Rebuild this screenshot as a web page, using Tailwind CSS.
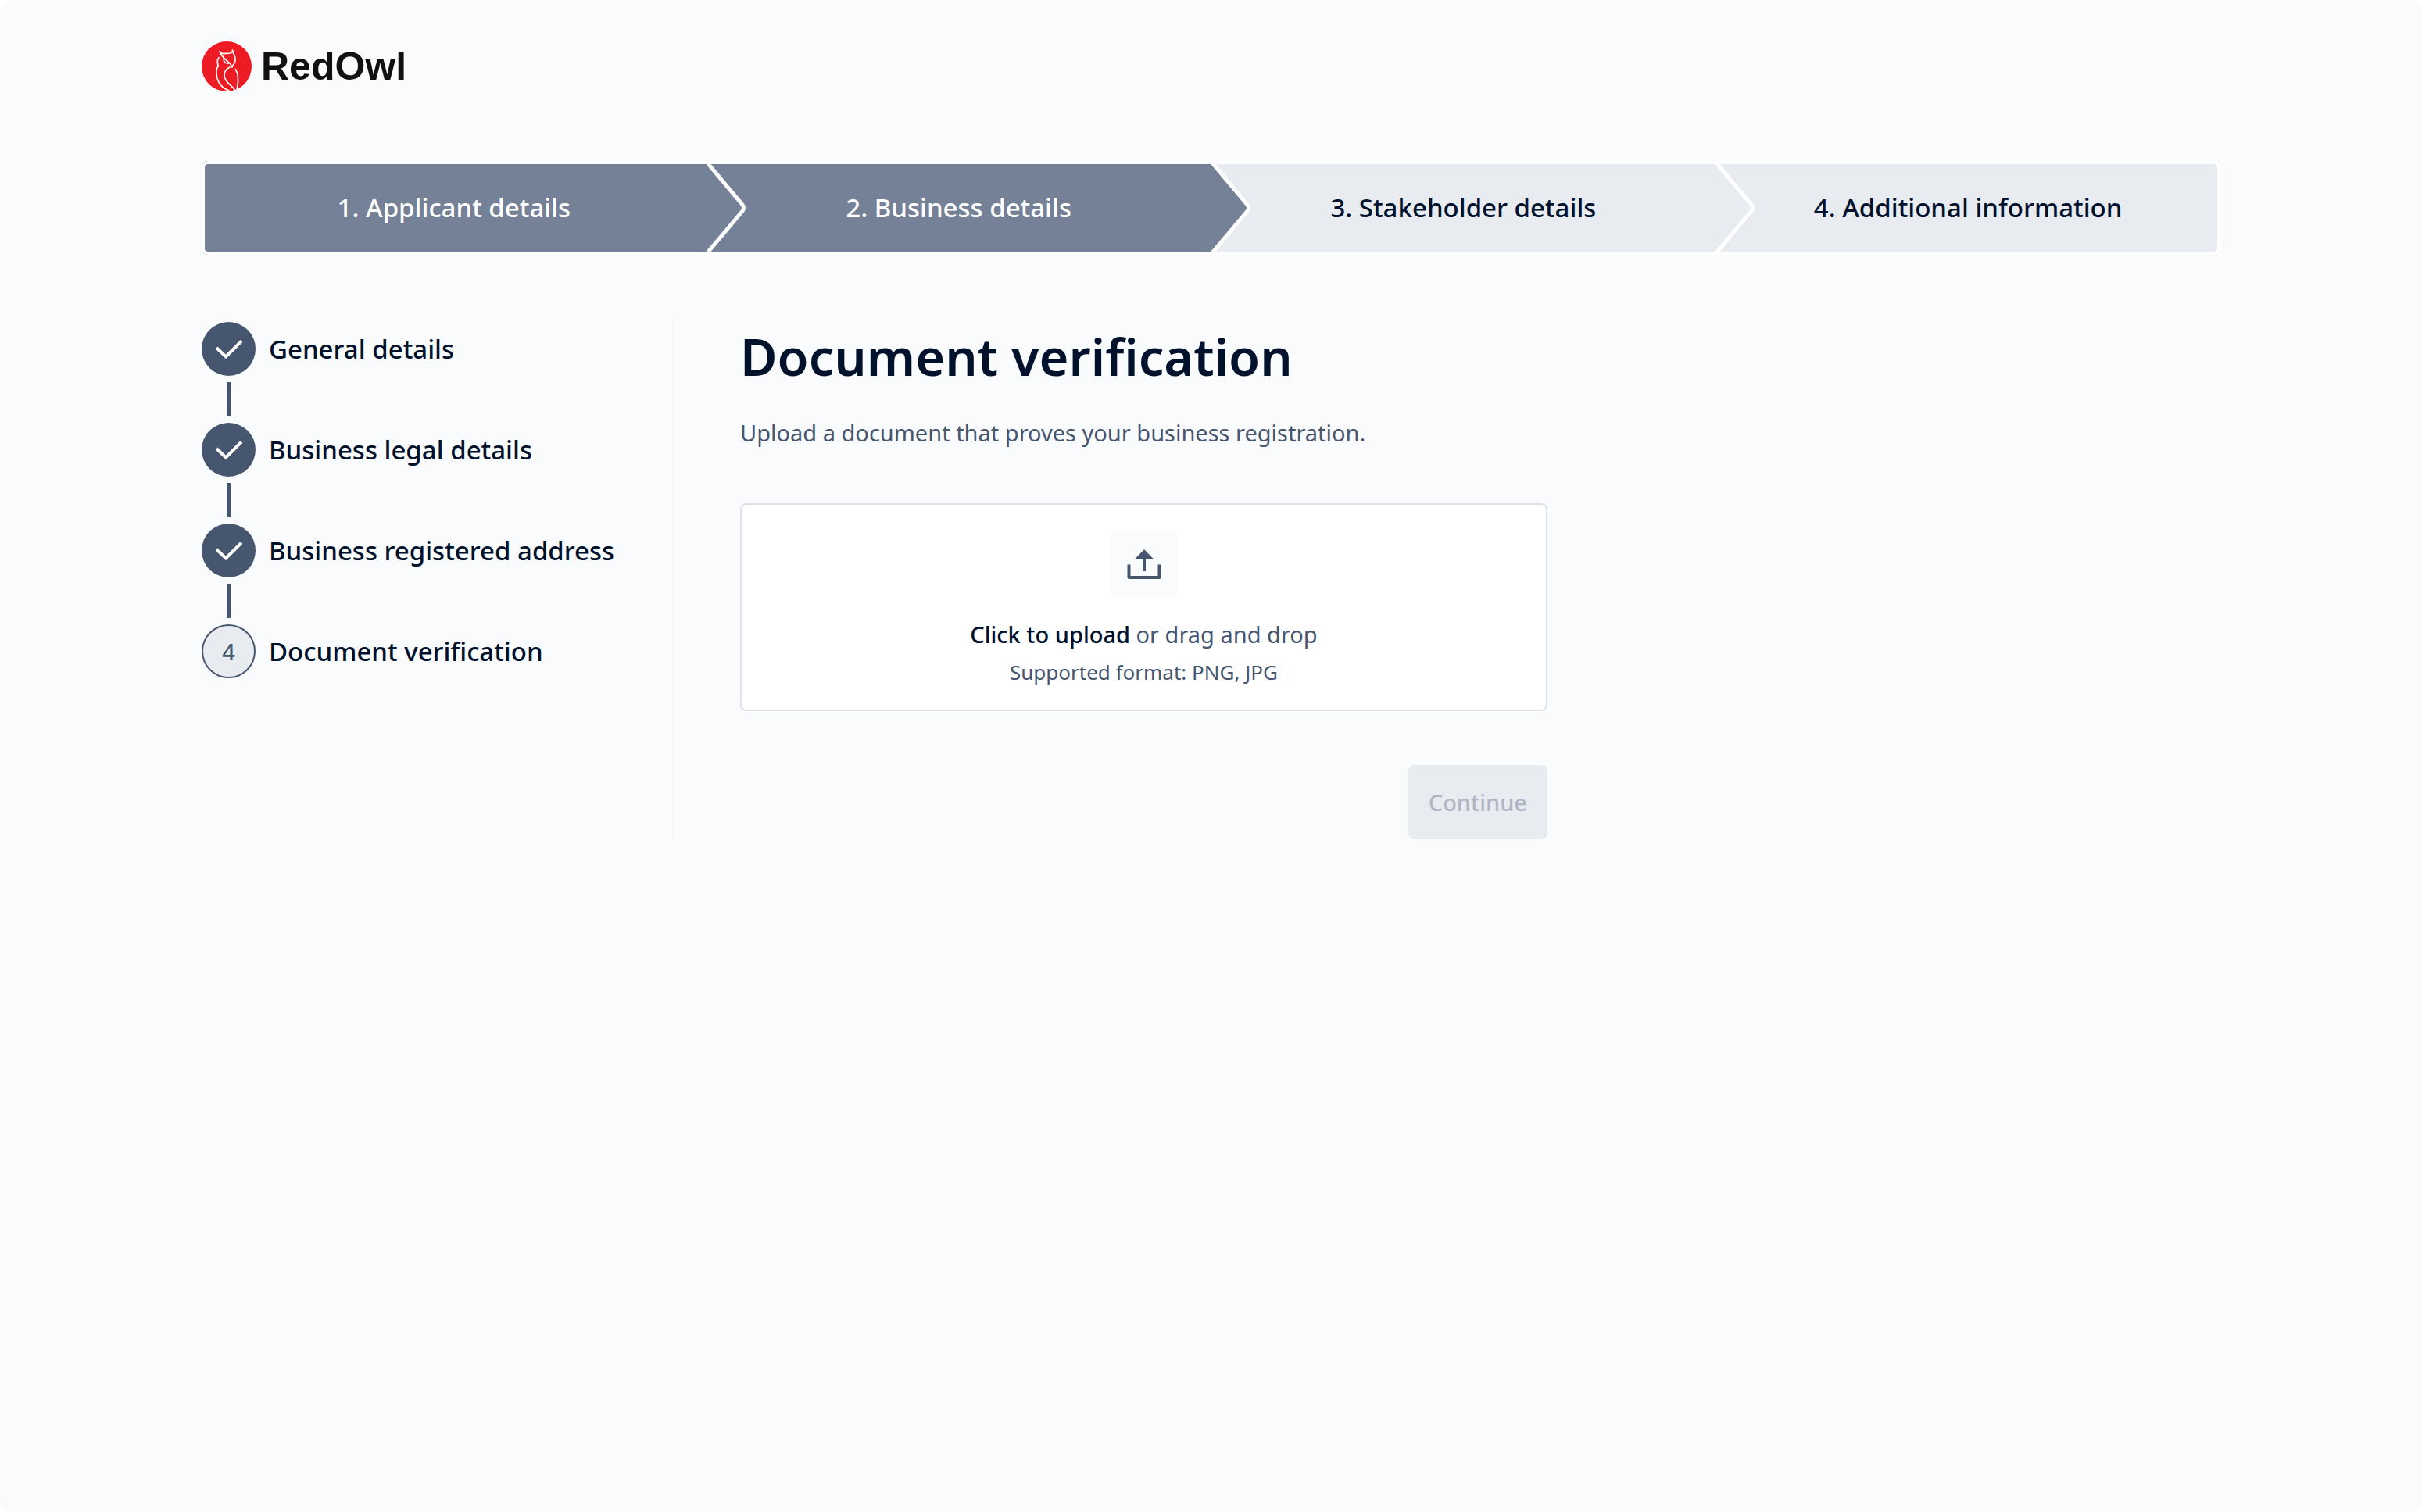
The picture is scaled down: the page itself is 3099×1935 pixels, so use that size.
<!DOCTYPE html>
<html lang="en">
<head>
    <meta charset="UTF-8">
    <meta name="viewport" content="width=device-width, initial-scale=1.0">
    <title>RedOwl - Document verification</title>
    <script src="https://cdn.jsdelivr.net/npm/@tailwindcss/browser@4"></script>
</head>
<body class="bg-white font-['Noto_Sans',sans-serif] text-[#00112c]">
    <div id="app" class="min-h-screen bg-[#fafbfd] rounded-2xl px-6">
        <div class="max-w-[2583px] mx-auto">
            <!-- Header -->
            <header class="pt-[53px] pb-[89px]">
                <a href="#" class="flex w-fit items-center gap-3" aria-label="RedOwl home">
                    <svg class="w-16 h-16" viewBox="24 26 192 192" fill="none" aria-hidden="true">
                        <circle cx="120" cy="122" r="96" fill="#ed1c24"/>
                        <g stroke="#fff" stroke-width="5" stroke-linecap="round" stroke-linejoin="round">
                            <path d="M93 64C97 71 102 73 109 73L134 71C140 70 143 65 142 59C147 68 144 72 149 79C157 94 154 103 148 112C144 118 142 120 141 125L136 115C128 100 106 98 93 64Z"/>
                            <path d="M108 93C108 105 116 112 130 109"/>
                            <path d="M90 88C81 98 84 109 88 121C78 132 77 160 91 185C101 201 115 210 129 215"/>
                            <path d="M132 125C108 138 106 157 118 176C128 192 143 198 152 213"/>
                            <path d="M154 133C166 152 165 183 160 208"/>
                        </g>
                    </svg>
                    <span class="font-['Liberation_Sans',sans-serif] font-bold text-[50px] leading-16 text-[#111111]">RedOwl</span>
                </a>
            </header>

            <!-- Progress bar -->
            <nav aria-label="Application progress">
                <ol class="relative grid grid-cols-4 h-[120px] rounded-lg overflow-hidden text-[33px] font-medium after:absolute after:inset-0 after:z-40 after:rounded-lg after:border-4 after:border-white">
                    <li class="relative z-30 flex items-center justify-center bg-[#758197] text-white">
                        1. Applicant details
                        <svg class="absolute left-full top-0 h-full w-[60px]" viewBox="0 0 60 120" fill="none" aria-hidden="true">
                            <path d="M-4 0H0L46 56Q49 60 46 64L0 120H-4Z" fill="#758197"/>
                            <path d="M-1 0L46 56Q49 60 46 64L-1 120" stroke="#fff" stroke-width="5"/>
                        </svg>
                    </li>
                    <li class="relative z-20 flex items-center justify-center bg-[#758197] text-white">
                        2. Business details
                        <svg class="absolute left-full top-0 h-full w-[60px]" viewBox="0 0 60 120" fill="none" aria-hidden="true">
                            <path d="M-4 0H0L46 56Q49 60 46 64L0 120H-4Z" fill="#758197"/>
                            <path d="M-1 0L46 56Q49 60 46 64L-1 120" stroke="#fff" stroke-width="5"/>
                        </svg>
                    </li>
                    <li class="relative z-10 flex items-center justify-center bg-[#e8ebf0]">
                        3. Stakeholder details
                        <svg class="absolute left-full top-0 h-full w-[60px]" viewBox="0 0 60 120" fill="none" aria-hidden="true">
                            <path d="M-4 0H0L46 56Q49 60 46 64L0 120H-4Z" fill="#e8ebf0"/>
                            <path d="M-1 0L46 56Q49 60 46 64L-1 120" stroke="#fff" stroke-width="5"/>
                        </svg>
                    </li>
                    <li class="flex items-center justify-center bg-[#e8ebf0]">4. Additional information</li>
                </ol>
            </nav>

            <div class="flex pt-[86px]">
                <!-- Steps -->
                <aside class="w-[605px] shrink-0 border-r-2 border-[#eceef2]">
                    <ol class="flex flex-col text-[33px] font-medium">
                        <li>
                            <div class="flex items-center gap-[17px]">
                                <svg class="size-[69px]" viewBox="0 0 69 69" fill="none" aria-hidden="true">
                                    <circle cx="34.5" cy="34.5" r="34.5" fill="#47566f"/>
                                    <path d="M19 33L31 44.5L51 24.5" stroke="#fff" stroke-width="4"/>
                                </svg>
                                General details
                            </div>
                            <div class="w-[5px] h-11 ml-8 my-2 bg-[#47566f]"></div>
                        </li>
                        <li>
                            <div class="flex items-center gap-[17px]">
                                <svg class="size-[69px]" viewBox="0 0 69 69" fill="none" aria-hidden="true">
                                    <circle cx="34.5" cy="34.5" r="34.5" fill="#47566f"/>
                                    <path d="M19 33L31 44.5L51 24.5" stroke="#fff" stroke-width="4"/>
                                </svg>
                                Business legal details
                            </div>
                            <div class="w-[5px] h-11 ml-8 my-2 bg-[#47566f]"></div>
                        </li>
                        <li>
                            <div class="flex items-center gap-[17px]">
                                <svg class="size-[69px]" viewBox="0 0 69 69" fill="none" aria-hidden="true">
                                    <circle cx="34.5" cy="34.5" r="34.5" fill="#47566f"/>
                                    <path d="M19 33L31 44.5L51 24.5" stroke="#fff" stroke-width="4"/>
                                </svg>
                                Business registered address
                            </div>
                            <div class="w-[5px] h-11 ml-8 my-2 bg-[#47566f]"></div>
                        </li>
                        <li aria-current="step">
                            <div class="flex items-center gap-[17px]">
                                <span class="flex items-center justify-center size-[69px] rounded-full border-2 border-[#47566f] bg-[#e8ebf0] text-[29px] text-[#47566f]">4</span>
                                Document verification
                            </div>
                        </li>
                    </ol>
                </aside>

                <!-- Upload form -->
                <main class="flex-1 max-w-[1117px] pl-[84px]">
                    <h1 class="text-[65px] leading-[88px] font-semibold">Document verification</h1>
                    <p class="mt-[34px] text-[29px] leading-10 text-[#47566f]">Upload a document that proves your business registration.</p>
                    <form id="uploadForm" class="mt-[70px]">
                        <input type="file" id="fileInput" class="sr-only" accept=".png,.jpg">
                        <label for="fileInput" class="flex flex-col items-center pt-[34px] pb-6 bg-white border-2 border-[#dee1e7] rounded-lg cursor-pointer text-[#47566f]">
                            <span class="flex items-center justify-center w-[88px] h-[84px] rounded-lg bg-[#fafbfd]">
                                <svg class="w-11 h-10" viewBox="0 0 44 40" fill="none" aria-hidden="true">
                                    <path d="M22 1L34.5 14H9.500Z" fill="#47566f"/>
                                    <path d="M22 12V29" stroke="#47566f" stroke-width="4"/>
                                    <path d="M2.500 20.500V37H41.500V20.500" stroke="#47566f" stroke-width="4" stroke-linejoin="round"/>
                                </svg>
                            </span>
                            <span class="mt-6 text-[29px] leading-12"><span class="font-medium text-[#00112c]">Click to upload</span> or drag and drop</span>
                            <span class="text-[26px] leading-12">Supported format: PNG, JPG</span>
                        </label>
                        <div class="flex justify-end mt-[69px]">
                            <button type="submit" class="h-[95px] px-[26px] rounded-lg bg-[#e8ebf0] text-[29px] font-medium text-[#b0b6c3]" disabled>Continue</button>
                        </div>
                    </form>
                </main>
            </div>
        </div>
    </div>

    <script>
        // Enable the button once a file is picked
        document.getElementById('fileInput').addEventListener('change', (e) => {
            document.querySelector('#uploadForm button').disabled = !e.target.files.length;
        });
    </script>
</body>
</html>
